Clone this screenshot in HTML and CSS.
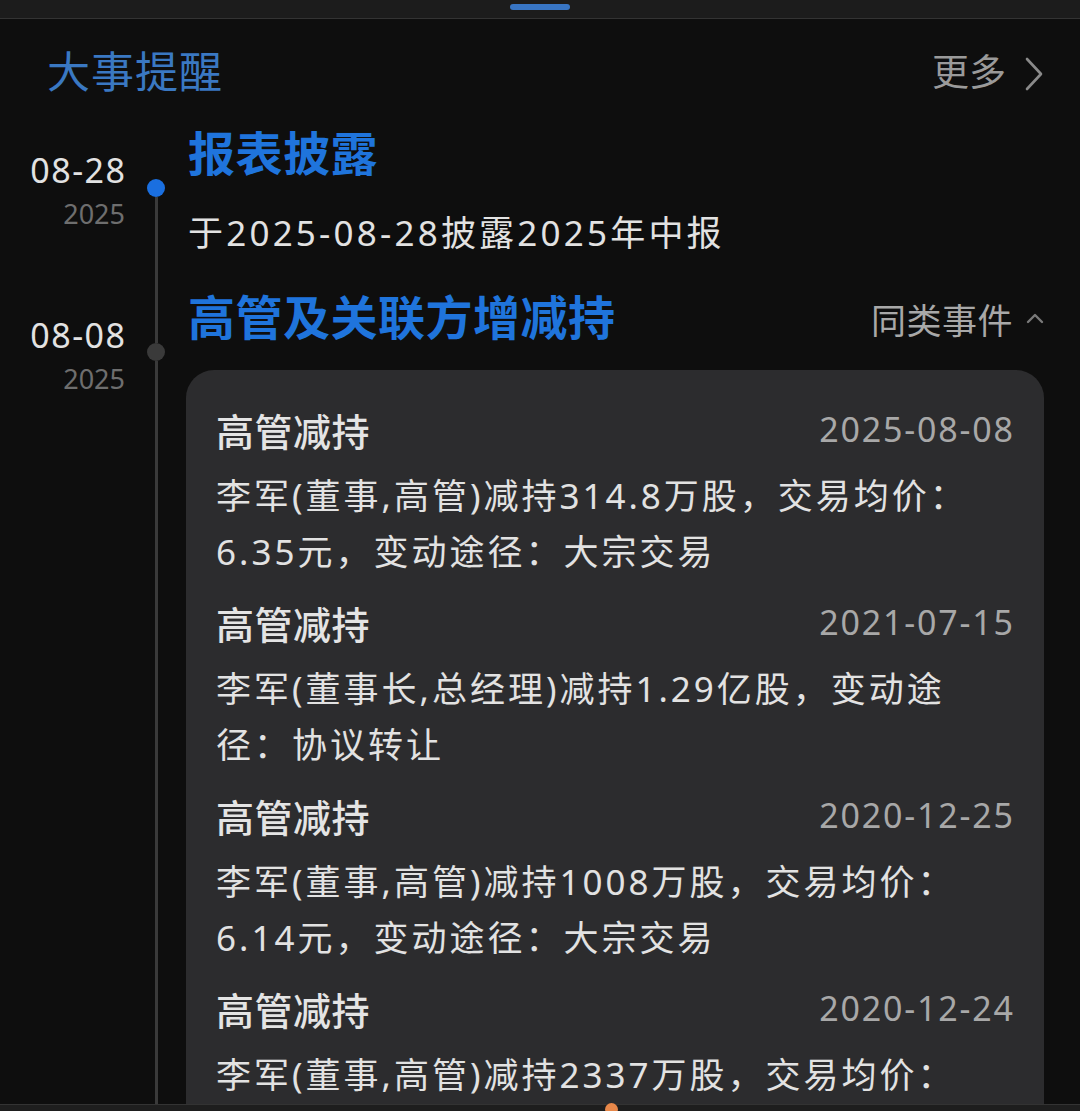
FILE: index.html
```html
<!DOCTYPE html>
<html lang="zh-CN">
<head>
<meta charset="utf-8">
<link rel="stylesheet" href="styles.css">
</head>
<body>
<div class="topbar"><div class="pill"></div></div>
<div class="header">
  <span class="title">大事提醒</span>
  <span class="more">更多<svg class="chev-right" width="20" height="34" viewBox="0 0 20 34"><path d="M3 2 L17 17 L3 32" fill="none" stroke="#8a8a8a" stroke-width="2.6" stroke-linecap="round" stroke-linejoin="round"/></svg></span>
</div>
<div class="timeline">
  <div class="event first">
    <div class="date"><div class="md">08-28</div><div class="yr">2025</div></div>
    <div class="rail"><div class="seg head"></div><div class="dot active"></div><div class="seg fill"></div></div>
    <div class="content">
      <div class="ev-title">报表披露</div>
      <div class="ev-desc">于2025-08-28披露2025年中报</div>
    </div>
  </div>
  <div class="event second">
    <div class="date"><div class="md">08-08</div><div class="yr">2025</div></div>
    <div class="rail"><div class="seg head"></div><div class="dot"></div><div class="seg fill"></div></div>
    <div class="content">
      <div class="ev-row">
        <div class="ev-title">高管及关联方增减持</div>
        <span class="similar">同类事件<svg class="chev-up" width="18" height="12" viewBox="0 0 18 12"><path d="M2 10 L9 3 L16 10" fill="none" stroke="#7a7a7a" stroke-width="2.4" stroke-linecap="round" stroke-linejoin="round"/></svg></span>
      </div>
      <div class="card">
        <div class="item">
          <div class="item-head"><span class="item-name">高管减持</span><span class="item-date">2025-08-08</span></div>
          <div class="item-body">李军(董事,高管)减持314.8万股，交易均价：6.35元，变动途径：大宗交易</div>
        </div>
        <div class="item">
          <div class="item-head"><span class="item-name">高管减持</span><span class="item-date">2021-07-15</span></div>
          <div class="item-body">李军(董事长,总经理)减持1.29亿股，变动途径：协议转让</div>
        </div>
        <div class="item">
          <div class="item-head"><span class="item-name">高管减持</span><span class="item-date">2020-12-25</span></div>
          <div class="item-body">李军(董事,高管)减持1008万股，交易均价：6.14元，变动途径：大宗交易</div>
        </div>
        <div class="item">
          <div class="item-head"><span class="item-name">高管减持</span><span class="item-date">2020-12-24</span></div>
          <div class="item-body">李军(董事,高管)减持2337万股，交易均价：6.20元，变动途径：大宗交易</div>
        </div>
      </div>
    </div>
  </div>
</div>
<div class="bottombar"><div class="fab"></div></div>
</body>
</html>
```

FILE: styles.css
```css
html, body {
  margin: 0;
  padding: 0;
  background: #0e0e0e;
  height: 1111px;
  overflow: hidden;
  font-family: "Noto Sans", "Noto Sans CJK SC", sans-serif;
}

.topbar {
  height: 18px;
  background: #1c1c1c;
  border-bottom: 1px solid #333;
  display: flex;
  justify-content: center;
  align-items: flex-start;
}
.pill {
  width: 60px;
  height: 6px;
  margin-top: 4px;
  border-radius: 3px;
  background: #3875c4;
}

.header {
  display: flex;
  justify-content: space-between;
  align-items: center;
  height: 60px;
  padding: 23px 36px 0 47px;
}
.title {
  font-size: 43px;
  line-height: 60px;
  color: #3a78c2;
  letter-spacing: 1px;
}
.more {
  display: flex;
  align-items: center;
  font-size: 37px;
  color: #9a9a9a;
  line-height: 60px;
}
.chev-right {
  margin-left: 18px;
  margin-top: 4px;
}

.timeline {
  margin-top: 25px;
}
.event {
  display: grid;
  grid-template-columns: 140px 32px 1fr;
  padding-right: 36px;
}
.date {
  text-align: right;
  padding-right: 15px;
  padding-top: 21px;
}
.md {
  font-size: 34px;
  letter-spacing: 1.5px;
  margin-right: -1.5px;
  line-height: 44px;
  color: #e2e2e2;
}
.yr {
  font-size: 27px;
  line-height: 44px;
  color: #6e6e6e;
}
.second .date { padding-top: 22px; }

.rail {
  display: flex;
  flex-direction: column;
  align-items: center;
}
.seg {
  width: 3px;
  background: #3a3a3a;
}
.seg.head { height: 52px; }
.first .seg.head { background: transparent; }
.second .seg.head { height: 52px; }
.seg.fill { flex: 1; }
.dot {
  width: 18px;
  height: 18px;
  border-radius: 50%;
  background: #3a3a3a;
}
.dot.active { background: #1a6fe0; }

.content {
  margin-left: 16px;
}
.first .content { padding-bottom: 34px; }
.ev-title {
  font-size: 47px;
  letter-spacing: 0.5px;
  font-weight: 700;
  line-height: 52px;
  padding-bottom: 8px;
  color: #1f74dc;
}
.ev-desc {
  margin-top: 22px;
  font-size: 35px;
  letter-spacing: 3.2px;
  line-height: 48px;
  color: #e2e2e2;
}
.ev-row {
  display: flex;
  justify-content: space-between;
  align-items: flex-start;
}
.similar {
  display: flex;
  align-items: center;
  font-size: 35px;
  letter-spacing: 0.5px;
  line-height: 60px;
  color: #a8a8a8;
}
.chev-up {
  margin-left: 13px;
  margin-top: -6px;
}

.card {
  margin: 19px 0 0 -2px;
  background: #2c2c2e;
  border-radius: 28px;
  padding: 33px 31px 40px 30px;
}
.item + .item { margin-top: 16px; }
.item-head {
  display: flex;
  justify-content: space-between;
  align-items: center;
  height: 52px;
}
.item-name {
  font-size: 38px;
  letter-spacing: 0.5px;
  font-weight: 500;
  color: #e4e4e4;
}
.item-date {
  font-size: 34px;
  letter-spacing: 1.8px;
  margin-right: -1.8px;
  color: #a8a8a8;
}
.item-body {
  margin-top: 13px;
  max-width: 762px;
  font-size: 35px;
  letter-spacing: 3px;
  line-height: 56px;
  color: #e2e2e2;
}

.bottombar {
  position: fixed;
  left: 0;
  right: 0;
  bottom: 0;
  height: 6px;
  background: #1e1e1e;
  border-top: 1px solid #333;
}
.fab {
  position: absolute;
  left: 605px;
  top: -2px;
  width: 13px;
  height: 13px;
  border-radius: 50%;
  background: #e8884a;
}
```
